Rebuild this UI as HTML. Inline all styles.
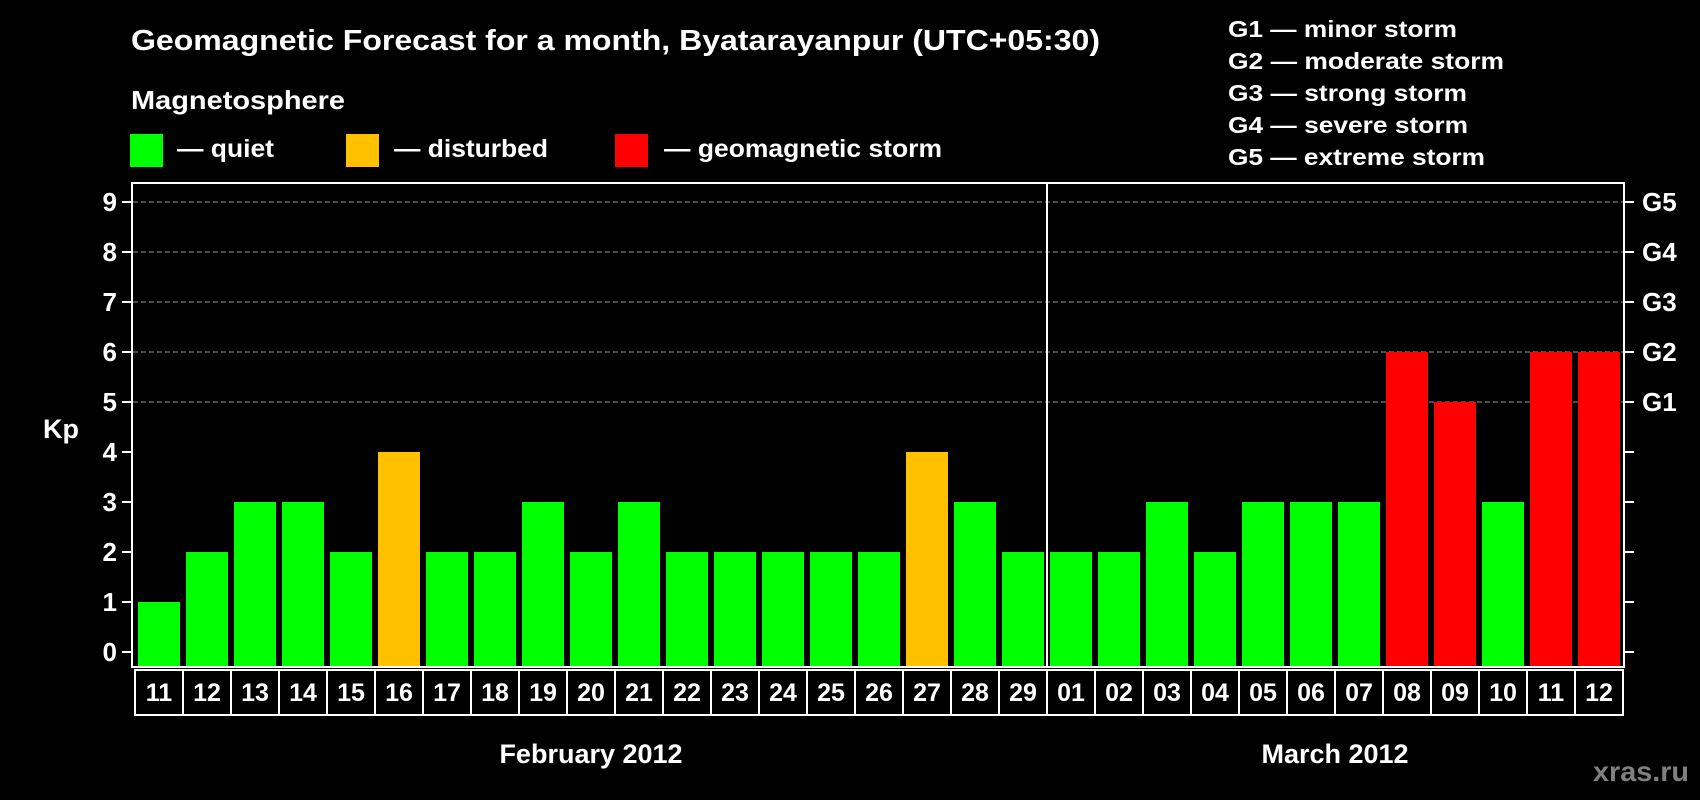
<!DOCTYPE html>
<html><head><meta charset="utf-8"><style>
html,body{margin:0;padding:0;background:#000;width:1700px;height:800px;overflow:hidden}
svg{display:block}
text{font-family:"Liberation Sans",Arial,sans-serif;font-weight:bold;fill:#fff}
</style></head><body>
<svg width="1700" height="800" viewBox="0 0 1700 800" xmlns="http://www.w3.org/2000/svg">
<rect width="1700" height="800" fill="#000"/>
<text x="131" y="50" font-size="29" textLength="969" lengthAdjust="spacingAndGlyphs">Geomagnetic Forecast for a month, Byatarayanpur (UTC+05:30)</text>
<text x="131" y="109" font-size="26" textLength="214" lengthAdjust="spacingAndGlyphs">Magnetosphere</text>
<rect x="130" y="134" width="33" height="33" fill="#00ff00"/>
<text x="177" y="157" font-size="25" textLength="97" lengthAdjust="spacingAndGlyphs">— quiet</text>
<rect x="346" y="134" width="33" height="33" fill="#ffc000"/>
<text x="394" y="157" font-size="25" textLength="154" lengthAdjust="spacingAndGlyphs">— disturbed</text>
<rect x="615" y="134" width="33" height="33" fill="#ff0000"/>
<text x="664" y="157" font-size="25" textLength="278" lengthAdjust="spacingAndGlyphs">— geomagnetic storm</text>
<g font-size="23">
<text x="1228" y="37" textLength="229" lengthAdjust="spacingAndGlyphs">G1 — minor storm</text>
<text x="1228" y="69" textLength="276" lengthAdjust="spacingAndGlyphs">G2 — moderate storm</text>
<text x="1228" y="101" textLength="239" lengthAdjust="spacingAndGlyphs">G3 — strong storm</text>
<text x="1228" y="133" textLength="240" lengthAdjust="spacingAndGlyphs">G4 — severe storm</text>
<text x="1228" y="165" textLength="257" lengthAdjust="spacingAndGlyphs">G5 — extreme storm</text>
</g>
<g stroke="#999" stroke-width="1" stroke-dasharray="5,3">
<line x1="133" y1="202" x2="1623" y2="202"/>
<line x1="133" y1="252" x2="1623" y2="252"/>
<line x1="133" y1="302" x2="1623" y2="302"/>
<line x1="133" y1="352" x2="1623" y2="352"/>
<line x1="133" y1="402" x2="1623" y2="402"/>
</g>
<g>
<rect x="138" y="602" width="42" height="65" fill="#00ff00"/>
<rect x="186" y="552" width="42" height="115" fill="#00ff00"/>
<rect x="234" y="502" width="42" height="165" fill="#00ff00"/>
<rect x="282" y="502" width="42" height="165" fill="#00ff00"/>
<rect x="330" y="552" width="42" height="115" fill="#00ff00"/>
<rect x="378" y="452" width="42" height="215" fill="#ffc000"/>
<rect x="426" y="552" width="42" height="115" fill="#00ff00"/>
<rect x="474" y="552" width="42" height="115" fill="#00ff00"/>
<rect x="522" y="502" width="42" height="165" fill="#00ff00"/>
<rect x="570" y="552" width="42" height="115" fill="#00ff00"/>
<rect x="618" y="502" width="42" height="165" fill="#00ff00"/>
<rect x="666" y="552" width="42" height="115" fill="#00ff00"/>
<rect x="714" y="552" width="42" height="115" fill="#00ff00"/>
<rect x="762" y="552" width="42" height="115" fill="#00ff00"/>
<rect x="810" y="552" width="42" height="115" fill="#00ff00"/>
<rect x="858" y="552" width="42" height="115" fill="#00ff00"/>
<rect x="906" y="452" width="42" height="215" fill="#ffc000"/>
<rect x="954" y="502" width="42" height="165" fill="#00ff00"/>
<rect x="1002" y="552" width="42" height="115" fill="#00ff00"/>
<rect x="1050" y="552" width="42" height="115" fill="#00ff00"/>
<rect x="1098" y="552" width="42" height="115" fill="#00ff00"/>
<rect x="1146" y="502" width="42" height="165" fill="#00ff00"/>
<rect x="1194" y="552" width="42" height="115" fill="#00ff00"/>
<rect x="1242" y="502" width="42" height="165" fill="#00ff00"/>
<rect x="1290" y="502" width="42" height="165" fill="#00ff00"/>
<rect x="1338" y="502" width="42" height="165" fill="#00ff00"/>
<rect x="1386" y="352" width="42" height="315" fill="#ff0000"/>
<rect x="1434" y="402" width="42" height="265" fill="#ff0000"/>
<rect x="1482" y="502" width="42" height="165" fill="#00ff00"/>
<rect x="1530" y="352" width="42" height="315" fill="#ff0000"/>
<rect x="1578" y="352" width="42" height="315" fill="#ff0000"/>
</g>
<rect x="132" y="183" width="1492" height="484" fill="none" stroke="#fff" stroke-width="2"/>
<line x1="1047" y1="183" x2="1047" y2="667" stroke="#fff" stroke-width="2"/>
<g stroke="#fff" stroke-width="2">
<line x1="122" y1="652" x2="131" y2="652"/><line x1="122" y1="602" x2="131" y2="602"/>
<line x1="122" y1="552" x2="131" y2="552"/><line x1="122" y1="502" x2="131" y2="502"/>
<line x1="122" y1="452" x2="131" y2="452"/><line x1="122" y1="402" x2="131" y2="402"/>
<line x1="122" y1="352" x2="131" y2="352"/><line x1="122" y1="302" x2="131" y2="302"/>
<line x1="122" y1="252" x2="131" y2="252"/><line x1="122" y1="202" x2="131" y2="202"/>
<line x1="1625" y1="652" x2="1634" y2="652"/><line x1="1625" y1="602" x2="1634" y2="602"/>
<line x1="1625" y1="552" x2="1634" y2="552"/><line x1="1625" y1="502" x2="1634" y2="502"/>
<line x1="1625" y1="452" x2="1634" y2="452"/><line x1="1625" y1="402" x2="1634" y2="402"/>
<line x1="1625" y1="352" x2="1634" y2="352"/><line x1="1625" y1="302" x2="1634" y2="302"/>
<line x1="1625" y1="252" x2="1634" y2="252"/><line x1="1625" y1="202" x2="1634" y2="202"/>
</g>
<g font-size="26" text-anchor="end">
<text x="117" y="661">0</text><text x="117" y="611">1</text><text x="117" y="561">2</text>
<text x="117" y="511">3</text><text x="117" y="461">4</text><text x="117" y="411">5</text>
<text x="117" y="361">6</text><text x="117" y="311">7</text><text x="117" y="261">8</text>
<text x="117" y="211">9</text>
</g>
<text x="43" y="438" font-size="27">Kp</text>
<g font-size="26">
<text x="1642" y="411">G1</text><text x="1642" y="361">G2</text><text x="1642" y="311">G3</text>
<text x="1642" y="261">G4</text><text x="1642" y="211">G5</text>
</g>
<g stroke="#fff" stroke-width="2" fill="none">
<line x1="134" y1="670" x2="1624" y2="670"/>
<line x1="134" y1="715" x2="1624" y2="715"/>
<path d="M135 670V715M183 670V715M231 670V715M279 670V715M327 670V715M375 670V715M423 670V715M471 670V715M519 670V715M567 670V715M615 670V715M663 670V715M711 670V715M759 670V715M807 670V715M855 670V715M903 670V715M951 670V715M999 670V715M1047 670V715M1095 670V715M1143 670V715M1191 670V715M1239 670V715M1287 670V715M1335 670V715M1383 670V715M1431 670V715M1479 670V715M1527 670V715M1575 670V715M1623 670V715"/>
</g>
<g font-size="25" text-anchor="middle">
<text x="159" y="701">11</text><text x="207" y="701">12</text><text x="255" y="701">13</text>
<text x="303" y="701">14</text><text x="351" y="701">15</text><text x="399" y="701">16</text>
<text x="447" y="701">17</text><text x="495" y="701">18</text><text x="543" y="701">19</text>
<text x="591" y="701">20</text><text x="639" y="701">21</text><text x="687" y="701">22</text>
<text x="735" y="701">23</text><text x="783" y="701">24</text><text x="831" y="701">25</text>
<text x="879" y="701">26</text><text x="927" y="701">27</text><text x="975" y="701">28</text>
<text x="1023" y="701">29</text><text x="1071" y="701">01</text><text x="1119" y="701">02</text>
<text x="1167" y="701">03</text><text x="1215" y="701">04</text><text x="1263" y="701">05</text>
<text x="1311" y="701">06</text><text x="1359" y="701">07</text><text x="1407" y="701">08</text>
<text x="1455" y="701">09</text><text x="1503" y="701">10</text><text x="1551" y="701">11</text>
<text x="1599" y="701">12</text>
</g>
<text x="591" y="763" font-size="27" text-anchor="middle">February 2012</text>
<text x="1335" y="763" font-size="27" text-anchor="middle">March 2012</text>
<text x="1593" y="781" font-size="28" textLength="96" lengthAdjust="spacingAndGlyphs" style="fill:#808080">xras.ru</text>
</svg>
</body></html>
